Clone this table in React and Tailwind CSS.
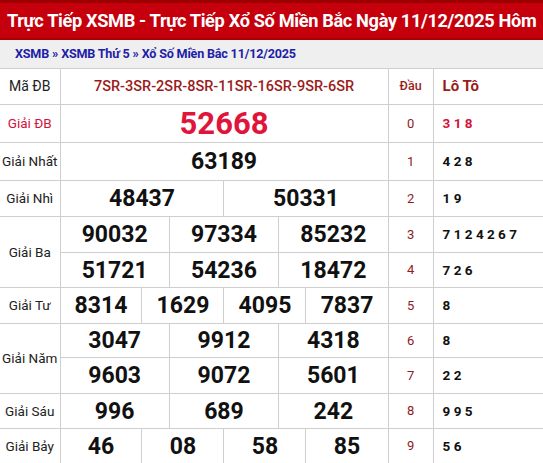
import React from "react";

const font = { fontFamily: "Roboto, 'Noto Sans', sans-serif" };

// prize rows: label, numbers (each array is one sub-row), span of a cell in 12ths
const prizes = [
  { label: "Giải ĐB", rows: [["52668"]], special: true },
  { label: "Giải Nhất", rows: [["63189"]] },
  { label: "Giải Nhì", rows: [["48437", "50331"]] },
  { label: "Giải Ba", rows: [["90032", "97334", "85232"], ["51721", "54236", "18472"]] },
  { label: "Giải Tư", rows: [["8314", "1629", "4095", "7837"]] },
  { label: "Giải Năm", rows: [["3047", "9912", "4318"], ["9603", "9072", "5601"]] },
  { label: "Giải Sáu", rows: [["996", "689", "242"]] },
  { label: "Giải Bảy", rows: [["46", "08", "58", "85"]] },
];

const loto = ["3 1 8", "4 2 8", "1 9", "7 1 2 4 2 6 7", "7 2 6", "8", "8", "2 2", "9 9 5", "5 6"];

const heights = ["h-[38px]", "h-[38px]", "h-[36px]", "h-[36px]", "h-[35px]", "h-[36px]", "h-[34px]", "h-[36px]", "h-[35px]", "h-[35px]"];

function App() {
  const lines = [];
  let idx = 0;
  prizes.forEach((p) => {
    p.rows.forEach((nums, r) => {
      const i = idx++;
      lines.push(
        <tr key={i} className={heights[i]}>
          {r === 0 && (
            <td
              rowSpan={p.rows.length}
              className={
                "border-r border-b border-[#cfcfcf] text-center text-[13.5px] " +
                (p.special ? "text-[#d0143c]" : "text-[#222]")
              }
            >
              {p.label}
            </td>
          )}
          {nums.map((n, k) => (
            <td
              key={k}
              colSpan={12 / nums.length}
              className={
                "border-r border-b border-[#cfcfcf] text-center font-bold leading-none " +
                (p.special ? "text-[31px] text-[#e0153c]" : "text-[23px] text-[#111]")
              }
            >
              {n}
            </td>
          ))}
          <td className="border-r border-b border-[#cfcfcf] text-center text-[13px] text-[#8e1c1c]">
            {i}
          </td>
          <td
            className={
              "border-b border-[#cfcfcf] pl-[9px] text-[13.5px] font-bold whitespace-pre " +
              (i === 0 ? "text-[#d0143c]" : "text-[#111]")
            }
          >
            {loto[i]}
          </td>
        </tr>
      );
    });
  });

  return (
    <div className="w-[543px] h-[463px] overflow-hidden bg-white" style={font}>
      <div className="bg-[#c5000c] border-t-[3px] border-t-[#9c0000] border-b-2 border-b-[#a80008] h-[40px] overflow-hidden pl-[7px]">
        <h1 className="text-white font-bold text-[18.2px] leading-[35px] tracking-[-0.35px] whitespace-nowrap">
          Trực Tiếp XSMB - Trực Tiếp Xổ Số Miền Bắc Ngày 11/12/2025 Hôm
        </h1>
      </div>
      <div className="bg-[#efefef] h-[28px] pl-[15px] flex items-center text-[12.6px] font-bold text-[#1e1ea8] tracking-[-0.2px]">
        <span>XSMB</span>
        <span className="mx-[3px]">»</span>
        <span>XSMB Thứ 5</span>
        <span className="mx-[3px]">»</span>
        <span>Xổ Số Miền Bắc 11/12/2025</span>
      </div>
      <table className="w-[543px] table-fixed border-collapse border-t border-[#cfcfcf]">
        <colgroup>
          <col className="w-[60px]" />
          {Array.from({ length: 12 }).map((_, k) => (
            <col key={k} className="w-[27.333px]" />
          ))}
          <col className="w-[45px]" />
          <col className="w-[110px]" />
        </colgroup>
        <tbody>
          <tr className="h-[36px]">
            <td className="border-r border-b border-[#cfcfcf] text-center text-[14px] text-[#222]">Mã ĐB</td>
            <td colSpan={12} className="border-r border-b border-[#cfcfcf] text-center text-[14.5px] font-medium text-[#9a1c1c]">
              7SR-3SR-2SR-8SR-11SR-16SR-9SR-6SR
            </td>
            <td className="border-r border-b border-[#cfcfcf] text-center text-[12.5px] font-medium text-[#9a1c1c]">Đầu</td>
            <td className="border-b border-[#cfcfcf] pl-[9px] text-[15px] font-bold text-[#9a1c1c]">Lô Tô</td>
          </tr>
          {lines}
        </tbody>
      </table>
    </div>
  );
}

export default App;
